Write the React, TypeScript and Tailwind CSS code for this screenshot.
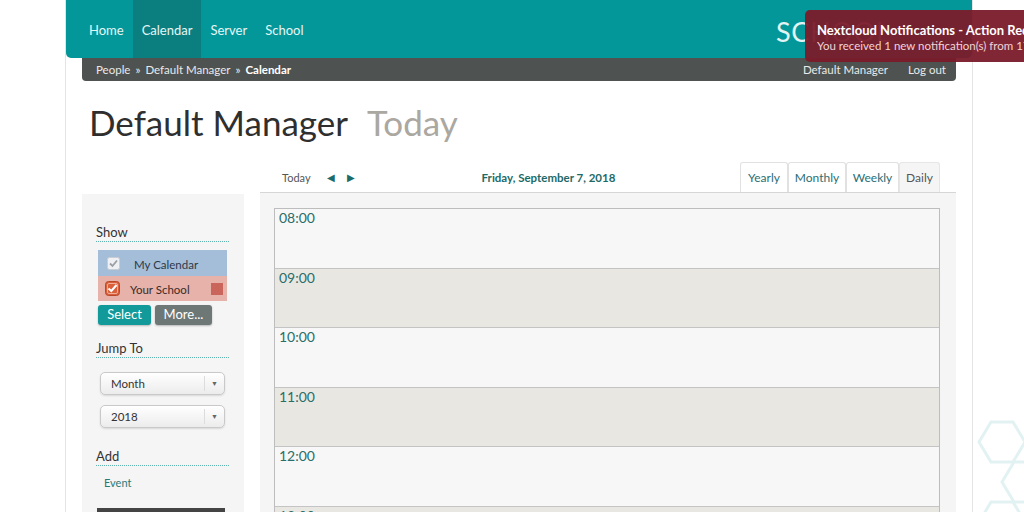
import React from "react";

const hours = ["08:00", "09:00", "10:00", "11:00", "12:00", "13:00"];

function Check({ tone }: { tone: "grey" | "orange" }) {
    if (tone === "grey") {
        return (
            <svg width="13" height="13" viewBox="0 0 13 13">
                <rect x="0.5" y="0.5" width="12" height="12" rx="2" fill="#eef0f3" stroke="#c9ccd2" />
                <path d="M3 6.5 L5.5 9 L10 3.5" fill="none" stroke="#9a9ea5" strokeWidth="1.8" />
            </svg>
        );
    }
    return (
        <svg width="15" height="15" viewBox="0 0 15 15">
            <rect x="0.5" y="0.5" width="14" height="14" rx="3" fill="#d9603a" stroke="#b8482a" />
            <rect x="2.5" y="2.5" width="10" height="10" rx="1.5" fill="none" stroke="#f4c3b0" strokeWidth="0.8" />
            <path d="M3.5 7.5 L6.3 10 L11.5 4" fill="none" stroke="#fff" strokeWidth="2" />
        </svg>
    );
}

function SelectBox({ label }: { label: string }) {
    return (
        <div className="flex h-[23px] w-[125px] items-center rounded-[5px] border border-[#c9c9c9] bg-gradient-to-b from-white to-[#ececec] shadow-[0_1px_2px_rgba(0,0,0,0.12)]">
            <span className="flex-1 pl-[10px] text-[11.5px] text-[#333]">{label}</span>
            <span className="flex h-[15px] w-[20px] items-center justify-center border-l border-[#dcdcdc] text-[7px] text-[#666]">
                ▼
            </span>
        </div>
    );
}

function SideTitle({ children }: { children: React.ReactNode }) {
    return (
        <div className="border-b border-dotted border-[#5fb3b0] pb-[2px] text-[13px] leading-[14px] text-[#333]">
            {children}
        </div>
    );
}

function Hexes() {
    const cells: React.ReactNode[] = [];
    for (let r = 0; r < 4; r++) {
        for (let c = 0; c < 3; c++) {
            const x = c * 46 + (r % 2 ? 23 : 0);
            const y = r * 40;
            cells.push(
                <polygon
                    key={`${r}-${c}`}
                    points={`${x + 12},${y} ${x + 34},${y} ${x + 46},${y + 20} ${x + 34},${y + 40} ${x + 12},${y + 40} ${x},${y + 20}`}
                    fill="none"
                    stroke="#e2f2f2"
                    strokeWidth="3"
                />
            );
        }
    }
    return (
        <svg className="absolute left-[975px] top-[418px]" width="60" height="100" viewBox="0 0 60 100">
            <g transform="translate(4,4)">{cells}</g>
        </svg>
    );
}

export default function App() {
    return (
        <div className="relative h-[512px] w-[1024px] overflow-hidden bg-white" style={{ fontFamily: "Lato, 'Open Sans', sans-serif" }}>
            <Hexes />

            <div className="relative ml-[65px] min-h-[512px] w-[908px] border-x border-[#e4e4e4] bg-white">
                {/* header */}
                <header className="flex h-[58px] items-stretch rounded-b-[5px] bg-[#03979a] pl-[14px] text-[13px] text-[#e6f6f6]">
                    <a className="flex items-center px-[9px] pt-[3px]">Home</a>
                    <a className="flex items-center bg-[#0b7f80] px-[9px] pt-[3px]">Calendar</a>
                    <a className="flex items-center px-[9px] pt-[3px]">Server</a>
                    <a className="flex items-center px-[9px] pt-[3px]">School</a>
                    <div className="ml-auto flex w-[196px] items-center pt-[6px] text-[27px] tracking-wide text-[#e3f4f4]">
                        SCHOOL
                    </div>
                </header>

                {/* breadcrumb */}
                <div className="mx-[16px] flex h-[23px] items-center rounded-b-[4px] bg-[#4e5351] px-[14px] text-[11.5px] text-[#e9e9e9]">
                    <span>People</span>
                    <span className="mx-[5px]">»</span>
                    <span>Default Manager</span>
                    <span className="mx-[5px]">»</span>
                    <span className="font-bold text-white">Calendar</span>
                    <span className="ml-auto">Default Manager</span>
                    <span className="ml-[20px] mr-[-4px]">Log out</span>
                </div>

                {/* title */}
                <h1 className="ml-[23px] mt-[18px] flex items-baseline gap-[19px] text-[35px] leading-[46px] text-[#2f2f2f]">
                    <span>Default Manager</span>
                    <span className="text-[#aba7a1]">Today</span>
                </h1>

                <div className="mt-[18px] flex gap-[16px] px-[16px]">
                    {/* sidebar */}
                    <aside className="mt-[31px] h-[330px] w-[162px] shrink-0 bg-[#f5f5f5] pl-[14px] pr-[15px] pt-[31px]">
                        <SideTitle>Show</SideTitle>
                        <div className="mx-[2px] mt-[8px]">
                            <div className="flex h-[26px] items-center bg-[#a4bdd8] pl-[9px] text-[11.5px] text-[#2d3a4a]">
                                <Check tone="grey" />
                                <span className="ml-[14px] mt-[3px]">My Calendar</span>
                            </div>
                            <div className="flex h-[25px] items-center bg-[#e6b2a9] pl-[7px] pr-[4px] text-[11.5px] text-[#3b2a28]">
                                <Check tone="orange" />
                                <span className="ml-[10px] mt-[3px]">Your School</span>
                                <span className="ml-auto h-[12px] w-[12px] bg-[#c9655b]" />
                            </div>
                        </div>
                        <div className="mx-[2px] mt-[4px] flex gap-[4px] text-[13px] text-white">
                            <button className="h-[20px] w-[53px] rounded-[3px] bg-[#12999a] shadow-[0_1px_2px_rgba(0,0,0,0.25)]">Select</button>
                            <button className="h-[20px] w-[57px] rounded-[3px] bg-[#6d7876] shadow-[0_1px_2px_rgba(0,0,0,0.25)]">More...</button>
                        </div>

                        <div className="mt-[16px]">
                            <SideTitle>Jump To</SideTitle>
                        </div>
                        <div className="ml-[4px] mt-[14px] flex flex-col gap-[10px]">
                            <SelectBox label="Month" />
                            <SelectBox label="2018" />
                        </div>

                        <div className="mt-[21px]">
                            <SideTitle>Add</SideTitle>
                        </div>
                        <div className="ml-[8px] mt-[9px] text-[11px] text-[#2a7a78]">Event</div>
                        <div className="ml-[1px] mt-[16px] h-[10px] w-[128px] bg-[#444]" />
                    </aside>

                    {/* main */}
                    <main className="flex-1">
                        <div className="flex h-[30px] items-center border-b border-[#d6d6d6]">
                            <span className="ml-[22px] mt-[1px] text-[11px] text-[#555]">Today</span>
                            <span className="ml-[16px] text-[10px] text-[#1d6b68]">◀</span>
                            <span className="ml-[12px] text-[10px] text-[#1d6b68]">▶</span>
                            <span className="ml-[127px] mt-[1px] text-[11.5px] font-bold text-[#1e6a67]">
                                Friday, September 7, 2018
                            </span>
                            <div className="ml-auto mr-[16px] flex self-end text-[12px]">
                                <span className="flex h-[30px] w-[48px] items-center justify-center rounded-t-[3px] border border-b-0 border-[#e1e1e1] bg-white text-[#2b6e74]">Yearly</span>
                                <span className="flex h-[30px] w-[58px] items-center justify-center rounded-t-[3px] border border-b-0 border-[#e1e1e1] bg-white text-[#2b6e74]">Monthly</span>
                                <span className="flex h-[30px] w-[53px] items-center justify-center rounded-t-[3px] border border-b-0 border-[#e1e1e1] bg-white text-[#2b6e74]">Weekly</span>
                                <span className="flex h-[30px] w-[41px] items-center justify-center rounded-t-[3px] border border-b-0 border-[#e6e6e6] bg-[#f5f5f5] text-[#555]">Daily</span>
                            </div>
                        </div>
                        <div className="h-[340px] bg-[#f5f5f5] pl-[14px] pr-[16px] pt-[15px]">
                            <div className="border-x border-t border-[#bdbdbd]">
                                {hours.map((h, i) => (
                                    <div
                                        key={h}
                                        className={`h-[59.6px] border-b border-[#c4c4c4] pl-[4px] text-[14px] leading-[18px] text-[#2a6e6a] ${i % 2 ? "bg-[#e9e7e2]" : "bg-[#f7f7f7]"}`}
                                    >
                                        {h}
                                    </div>
                                ))}
                            </div>
                        </div>
                    </main>
                </div>
            </div>

            {/* notification */}
            <div className="absolute left-[805px] top-[10px] h-[52px] w-[230px] rounded-l-[5px] bg-[#7a1a2a]/95 pl-[12px] pt-[12px] text-white">
                <div className="whitespace-nowrap text-[13px] font-bold leading-[16px]">Nextcloud Notifications - Action Required</div>
                <div className="whitespace-nowrap text-[11.5px] leading-[15px] text-[#f0d4d8]">You received 1 new notification(s) from 172.16.0.1</div>
            </div>
        </div>
    );
}
